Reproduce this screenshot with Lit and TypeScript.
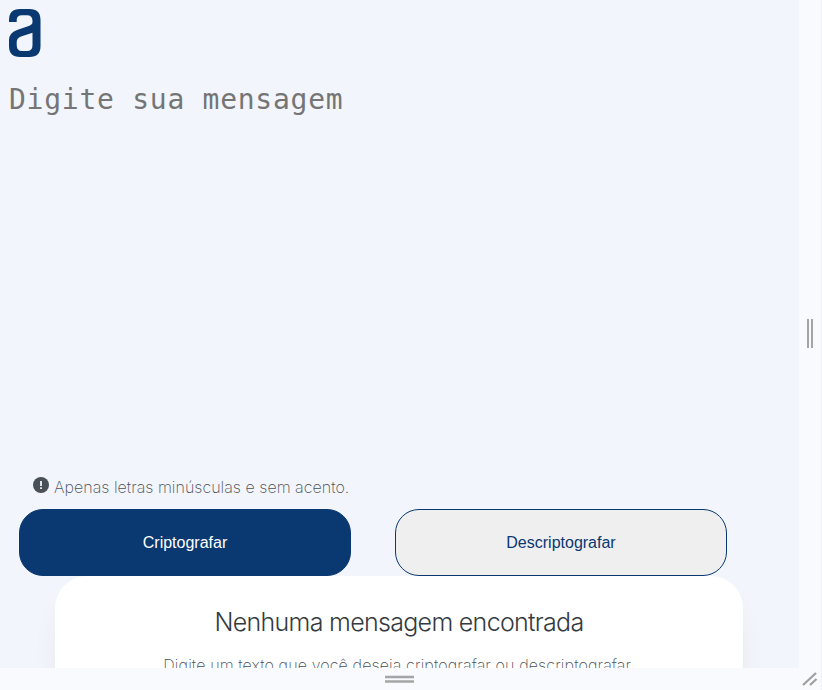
import { LitElement, html, css } from "lit";
import { customElement } from "lit/decorators.js";

@customElement("app-root")
export class AppRoot extends LitElement {
  static styles = css`
    :host {
      display: grid;
      grid-template: 668px 22px / 799px 22px;
      width: 821px;
      height: 690px;
      overflow: hidden;
      background: #f9fafe;
      border-right: 1px solid #eef1f8;
      font-family: Inter, "Liberation Sans", sans-serif;
    }
    .page {
      display: flex;
      flex-direction: column;
      overflow: hidden;
      background: #f2f5fc;
    }
    .logo {
      flex: none;
      display: block;
      width: 32px;
      height: 48px;
      margin: 9px 0 0 9px;
    }
    .message {
      flex: none;
      box-sizing: border-box;
      display: block;
      width: 680px;
      height: 400px;
      margin: 24px 0 0 9px;
      padding: 0;
      border: 0;
      outline: 0;
      resize: none;
      background: transparent;
      font: 28px/37px "DejaVu Sans Mono", monospace;
      letter-spacing: 0.74px;
    }
    .message::placeholder {
      color: #757575;
      opacity: 1;
    }
    .note {
      flex: none;
      display: flex;
      margin: -5px 0 0 33px;
      height: 33px;
      color: #495057;
      font-size: 16px;
      font-weight: 200;
      line-height: 22px;
      letter-spacing: 0.03px;
    }
    .note svg {
      margin: 1px 5px 0 0;
    }
    .actions {
      flex: none;
      display: flex;
      gap: 44px;
      margin-left: 19px;
    }
    button {
      box-sizing: border-box;
      width: 332px;
      height: 67px;
      padding: 0;
      border: 1px solid #0a3871;
      border-radius: 24px;
      background: #efefef;
      color: #0a3871;
      font: 16px "Liberation Sans", Arial, sans-serif;
    }
    button.primary {
      background: #0a3871;
      color: #fff;
    }
    .card {
      flex: none;
      box-sizing: border-box;
      width: 688px;
      height: 240px;
      margin-left: 55px;
      padding-top: 26px;
      border-radius: 32px;
      background: #fff;
      box-shadow: 0 24px 32px -8px rgba(0, 0, 0, 0.08);
      text-align: center;
    }
    h2 {
      margin: 0;
      color: #343a40;
      font-size: 25px;
      font-weight: 300;
      line-height: 40px;
      letter-spacing: -0.7px;
    }
    p {
      margin: 11px 0 0;
      color: #495057;
      font-size: 16px;
      font-weight: 200;
      line-height: 24px;
      letter-spacing: 0.12px;
    }
    .grip {
      display: flex;
      align-items: center;
      justify-content: center;
    }
  `;

  render() {
    return html`
      <main class="page">
        <svg class="logo" viewBox="0 0 32 48" fill="#0a3871" fill-rule="evenodd">
          <path
            d="M0 13V11Q0 0 11 0H20.500Q31.500 0 31.500 11V37Q31.500 48 20.500 48H11Q0 48 0 37V31Q0 24 8 21L19 17.300Q23.500 16 23.500 13V12Q23.500 6.300 18 6.300H13Q7.700 6.300 7.700 11V13ZM23.500 23.700L12 27.500Q7.700 29 7.700 33V36Q7.700 42 13 42H18Q23.500 42 23.500 36Z"
          />
        </svg>
        <textarea class="message" placeholder="Digite sua mensagem"></textarea>
        <div class="note">
          <svg width="16" height="16" viewBox="0 0 16 16">
            <circle cx="8" cy="8" r="8" fill="#495057" />
            <path d="M7.100 4h1.800v5H7.100zM7.100 10.300h1.800v1.700H7.100z" fill="#f2f5fc" />
          </svg>
          <span>Apenas letras minúsculas e sem acento.</span>
        </div>
        <div class="actions">
          <button class="primary">Criptografar</button>
          <button>Descriptografar</button>
        </div>
        <section class="card">
          <h2>Nenhuma mensagem encontrada</h2>
          <p>Digite um texto que você deseja criptografar ou descriptografar.</p>
        </section>
      </main>
      <div class="grip">
        <svg width="8" height="30" viewBox="0 0 8 30" stroke="#a5a5a5" stroke-width="2">
          <path d="M2 0V29M6 0V29" />
        </svg>
      </div>
      <div class="grip">
        <svg width="30" height="8" viewBox="0 0 30 8" stroke="#a5a5a5" stroke-width="2.300">
          <path d="M0 2H29M0 6.500H29" />
        </svg>
      </div>
      <div class="grip">
        <svg width="16" height="14" viewBox="0 0 16 14" stroke="#a0a0a0" stroke-width="2.300">
          <path d="M1 13L14 1M8 13L14.500 7" />
        </svg>
      </div>
    `;
  }
}
